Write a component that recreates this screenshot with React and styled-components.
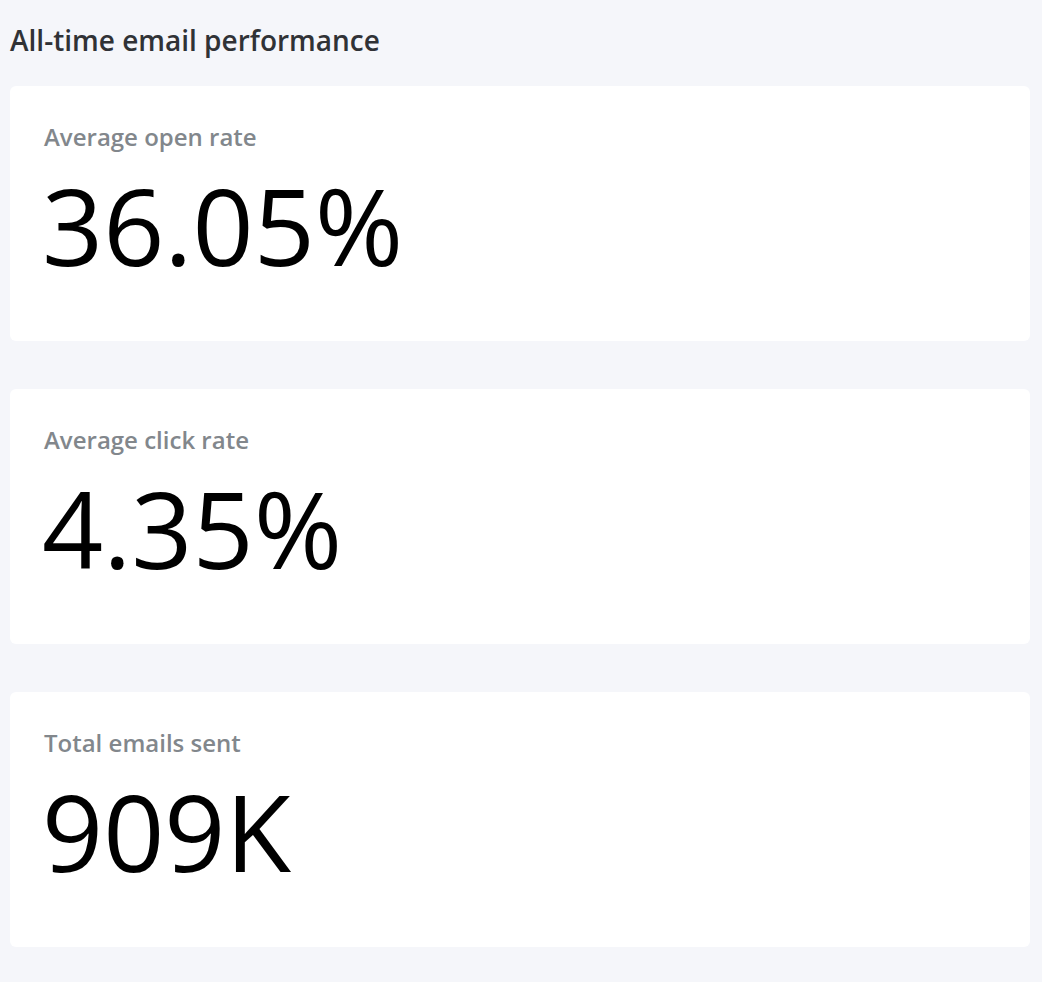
import React from "react";
import styled, { createGlobalStyle } from "styled-components";

const Global = createGlobalStyle`
  html, body { margin: 0; padding: 0; background: #f5f6fa; }
  body { font-family: "Open Sans", "Noto Sans", sans-serif; }
`;

const Page = styled.div`
  padding: 22px 12px 35px 10px;
  display: flex;
  flex-direction: column;
`;

const Title = styled.h2`
  margin: 0 0 28px 0;
  font-size: 28px;
  line-height: 36px;
  font-weight: 600;
  color: #303236;
  letter-spacing: 0;
`;

const Cards = styled.div`
  display: flex;
  flex-direction: column;
  gap: 48px;
`;

const Card = styled.div`
  background: #ffffff;
  border-radius: 6px;
  height: 255px;
  box-sizing: border-box;
  padding: 35px 34px 0;
  display: flex;
  flex-direction: column;
`;

const Label = styled.div`
  font-size: 24px;
  line-height: 32px;
  color: #82878c;
  font-weight: 600;
`;

const Value = styled.div`
  font-size: 107px;
  line-height: 1.2;
  color: #000000;
  font-weight: 400;
  margin-top: 8px;
  margin-left: -2px;
`;

const stats = [
  { label: "Average open rate", value: "36.05%" },
  { label: "Average click rate", value: "4.35%" },
  { label: "Total emails sent", value: "909K" },
];

export default function App() {
  return (
    <>
      <Global />
      <Page>
        <Title>All-time email performance</Title>
        <Cards>
          {stats.map((s) => (
            <Card key={s.label}>
              <Label>{s.label}</Label>
              <Value>{s.value}</Value>
            </Card>
          ))}
        </Cards>
      </Page>
    </>
  );
}
